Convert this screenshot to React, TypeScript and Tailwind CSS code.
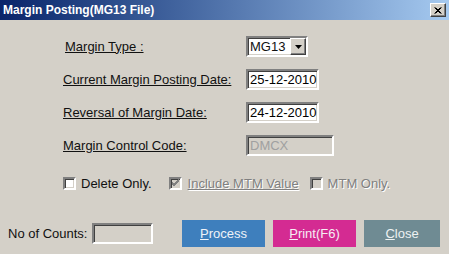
import React from "react";

const sunken =
  "border-2 border-t-[#808080] border-l-[#808080] border-b-white border-r-white shadow-[inset_1px_1px_0_#404040,inset_-1px_-1px_0_#d4d0c8]";
const raised =
  "border border-t-white border-l-white border-b-[#404040] border-r-[#404040] shadow-[inset_-1px_-1px_0_#808080]";

function CheckBox({ checked, disabled }: { checked?: boolean; disabled?: boolean }) {
  return (
    <div
      className={`w-[13px] h-[13px] ${sunken} ${disabled ? "bg-[#d4d0c8]" : "bg-white"} flex items-center justify-center`}
    >
      {checked && (
        <svg width="9" height="9" viewBox="0 0 9 9">
          <path d="M1 4 L3 6 L8 1 M1 5 L3 7 L8 2 M1 3 L3 5 L8 0" stroke="#808080" strokeWidth="1" fill="none" />
        </svg>
      )}
    </div>
  );
}

export default function App() {
  return (
    <div
      className="w-[449px] h-[254px] bg-[#d4d0c8] flex flex-col overflow-hidden text-[13px] text-[#111]"
      style={{ fontFamily: '"Liberation Sans", Arial, sans-serif' }}
    >
      {/* Title bar */}
      <div className="h-[20px] bg-gradient-to-r from-[#0a246a] to-[#a6caf0] flex items-center pl-[3px] pr-[3px]">
        <span className="text-white font-bold text-[12px] leading-none flex-1">Margin Posting(MG13 File)</span>
        <div className={`w-[16px] h-[14px] bg-[#d4d0c8] ${raised} flex items-center justify-center`}>
          <svg width="8" height="7" viewBox="0 0 8 7">
            <path d="M0.5 0.5 L6.5 6.5 M1.5 0.5 L7.5 6.5 M6.5 0.5 L0.5 6.5 M7.5 0.5 L1.5 6.5" stroke="#000" strokeWidth="1" />
          </svg>
        </div>
      </div>

      {/* Form rows */}
      <div className="pt-[16px] pl-[63px] grid grid-cols-[183px_auto] auto-rows-[21px] gap-y-[12px] items-center">
        <span className="underline pl-[2px]">Margin Type :</span>
        <div className={`w-[62px] h-[21px] bg-white ${sunken} flex items-center`}>
          <span className="flex-1 pl-[2px] leading-none">MG13</span>
          <div className={`w-[16px] h-[17px] bg-[#d4d0c8] ${raised} flex items-center justify-center`}>
            <svg width="7" height="4" viewBox="0 0 7 4">
              <path d="M0 0 H7 L3.5 4 Z" fill="#000" />
            </svg>
          </div>
        </div>

        <span className="underline">Current Margin Posting Date:</span>
        <div className={`w-[73px] h-[21px] bg-white ${sunken} flex items-center pl-[2px] leading-none text-black`}>
          25-12-2010
        </div>

        <span className="underline">Reversal of Margin Date:</span>
        <div className={`w-[73px] h-[21px] bg-white ${sunken} flex items-center pl-[2px] leading-none text-black`}>
          24-12-2010
        </div>

        <span className="underline">Margin Control Code:</span>
        <div className={`w-[88px] h-[21px] bg-[#d4d0c8] ${sunken} flex items-center pl-[2px] leading-none text-[#a0a0a0]`}>
          DMCX
        </div>
      </div>

      {/* Checkbox row */}
      <div className="mt-[21px] pl-[63px] flex items-center h-[13px]">
        <CheckBox />
        <span className="ml-[5px] leading-none">Delete Only.</span>
        <div className="ml-[17px]">
          <CheckBox checked disabled />
        </div>
        <span className="ml-[6px] leading-none underline text-[#808080] [text-shadow:1px_1px_0_#fff]">Include MTM Value</span>
        <div className="ml-[11px]">
          <CheckBox disabled />
        </div>
        <span className="ml-[5px] leading-none text-[#808080] [text-shadow:1px_1px_0_#fff]">MTM Only.</span>
      </div>

      {/* Bottom row */}
      <div className="mt-[30px] pl-[8px] flex items-center">
        <span className="leading-none w-[81px]">No of Counts:</span>
        <div className={`ml-[3px] w-[61px] h-[21px] bg-[#d4d0c8] ${sunken}`} />
        <div className="ml-[29px] w-[83px] h-[27px] bg-[#3e7fbd] flex items-center justify-center text-[#eef2f8] leading-none">
          <span><span className="underline">P</span>rocess</span>
        </div>
        <div className="ml-[8px] w-[83px] h-[27px] bg-[#d42b92] flex items-center justify-center text-[#f6eef4] leading-none">
          <span><span className="underline">P</span>rint(F6)</span>
        </div>
        <div className="ml-[8px] w-[76px] h-[27px] bg-[#6f8b93] flex items-center justify-center text-[#eef2f2] leading-none">
          <span><span className="underline">C</span>lose</span>
        </div>
      </div>
    </div>
  );
}
